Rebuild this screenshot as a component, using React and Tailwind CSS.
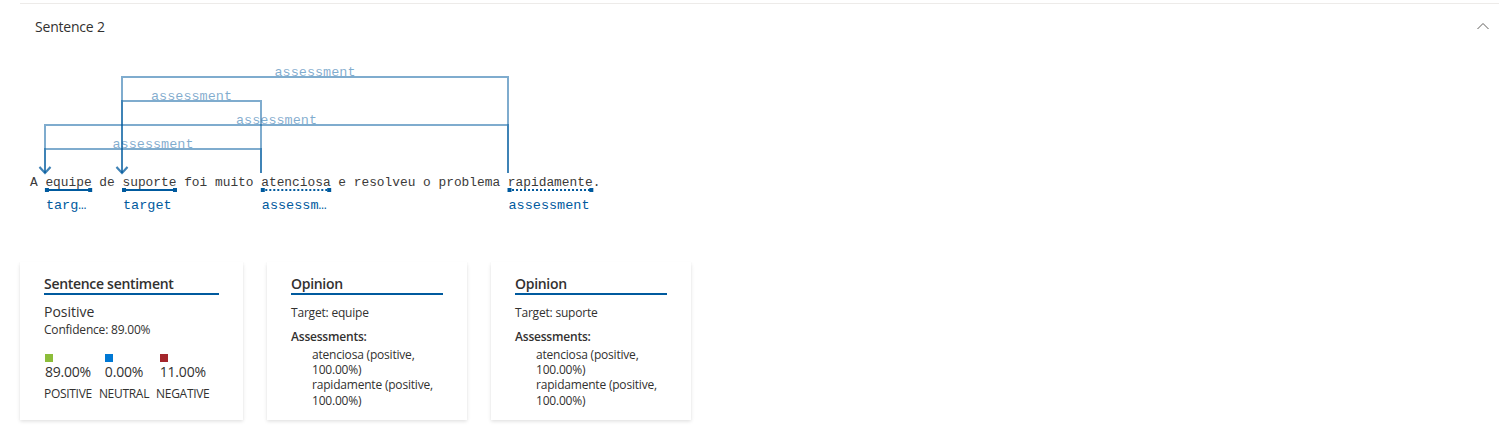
const CW = 7.71;
const X0 = 30;
const SENTENCE = "A equipe de suporte foi muito atenciosa e resolveu o problema rapidamente.";

const wx = (i) => X0 + i * CW;

const words = [
    { start: 2, len: 6, label: "targ…", dotted: false },
    { start: 12, len: 7, label: "target", dotted: false },
    { start: 30, len: 9, label: "assessm…", dotted: true },
    { start: 62, len: 11, label: "assessment", dotted: true },
];

// arcs: from (assessment x) to (target x, arrow), at height y
const arcs = [
    { from: 508, to: 122, y: 77 },
    { from: 261, to: 122, y: 101 },
    { from: 508, to: 45, y: 125 },
    { from: 261, to: 45, y: 149 },
];

const mono = { fontFamily: "'Liberation Mono', monospace" };

const Diagram = () => {
    const bottom = 173;
    return (
        <svg width="1492" height="172" className="block">
            <g transform="translate(-20,-48)">
                {arcs.map((a, i) => (
                    <g key={i} stroke="#005a9e" strokeOpacity="0.5" strokeWidth="2" fill="none">
                        <polyline points={`${a.from},${bottom} ${a.from},${a.y} ${a.to},${a.y} ${a.to},${bottom}`} />
                        <polyline points={`${a.to - 5.5},${bottom - 6} ${a.to},${bottom} ${a.to + 5.5},${bottom - 6}`} />
                    </g>
                ))}
                {arcs.map((a, i) => (
                    <text
                        key={"t" + i}
                        x={(a.from + a.to) / 2}
                        y={a.y - 1.5}
                        textAnchor="middle"
                        fill="#005a9e"
                        fillOpacity="0.5"
                        fontSize="13.5"
                        style={mono}
                    >
                        assessment
                    </text>
                ))}
                <text x={X0} y={186} fontSize="12.85" fill="#3b3a39" style={{ ...mono, whiteSpace: "pre" }}>
                    {SENTENCE}
                </text>
                {words.map((w, i) => {
                    const x1 = wx(w.start);
                    const x2 = wx(w.start + w.len);
                    return (
                        <g key={"w" + i} fill="#005a9e">
                            <line
                                x1={x1}
                                x2={x2}
                                y1={190}
                                y2={190}
                                stroke="#005a9e"
                                strokeWidth="2"
                                strokeDasharray={w.dotted ? "2 2" : undefined}
                            />
                            <rect x={x1 - 0.5} y={188} width="4" height="4" />
                            <rect x={x2 - 3.5} y={188} width="4" height="4" />
                            <text x={x1 + 0.5} y={208.5} fontSize="13.5" style={mono}>
                                {w.label}
                            </text>
                        </g>
                    );
                })}
            </g>
        </svg>
    );
};

const Card = ({ width, title, children }) => {
    return (
        <div
            className={`${width} h-[158px] bg-white px-6 pt-[13px] shadow-[0_1.6px_3.6px_rgba(0,0,0,0.13),0_0.3px_0.9px_rgba(0,0,0,0.11)]`}
        >
            <div className="text-[14px] leading-[18px] font-semibold tracking-[-0.3px] border-b-2 border-[#005a9e]">
                {title}
            </div>
            {children}
        </div>
    );
};

const scores = [
    { value: "89.00%", label: "POSITIVE", color: "bg-[#8cbd3a]" },
    { value: "0.00%", label: "NEUTRAL", color: "bg-[#0078d4]" },
    { value: "11.00%", label: "NEGATIVE", color: "bg-[#a4262c]" },
];

const Opinion = ({ target }) => (
    <Card width="w-[200px]" title="Opinion">
        <div className="mt-[10px] text-[12px] leading-[16px] tracking-[-0.2px]">Target: {target}</div>
        <div className="mt-[8px] text-[12px] leading-[16px] font-semibold tracking-[-0.2px]">Assessments:</div>
        <div className="pl-[21px] mt-[1.5px] text-[12px] leading-[15.4px] tracking-[-0.2px]">
            <div>atenciosa (positive, 100.00%)</div>
            <div>rapidamente (positive, 100.00%)</div>
        </div>
    </Card>
);

export default function App() {
    return (
        <div
            className="bg-white text-[#323130] w-[1512px] h-[431px] overflow-hidden pl-5 pr-[13px]"
            style={{ fontFamily: "'Segoe UI', 'Open Sans', sans-serif" }}
        >
            <div className="mt-[3px] border-t border-[#edebe9]">
                <div className="h-[44px] flex items-center justify-between pl-[15px] pr-[10px]">
                    <span className="text-[14px] tracking-[-0.2px]">Sentence 2</span>
                    <svg width="12" height="8" viewBox="0 0 12 8">
                        <polyline points="0.5,7 6,1.5 11.5,7" fill="none" stroke="#605e5c" strokeWidth="1" />
                    </svg>
                </div>
            </div>

            <Diagram />

            <div className="mt-[42px] flex gap-6">
                <Card width="w-[223px]" title="Sentence sentiment">
                    <div className="mt-[7px] text-[14px] leading-[20px]">Positive</div>
                    <div className="text-[12px] leading-[16px] tracking-[-0.2px]">Confidence: 89.00%</div>
                    <div className="mt-[16px] flex gap-[7px]">
                        {scores.map((s) => (
                            <div key={s.label} className="flex flex-col items-center">
                                <div>
                                    <div className={`w-2 h-2 ${s.color}`}></div>
                                    <div className="text-[14px] leading-[20px] tracking-[-0.2px]">{s.value}</div>
                                </div>
                                <div className="mt-[4px] text-[12px] leading-[16px] tracking-[-0.3px]">{s.label}</div>
                            </div>
                        ))}
                    </div>
                </Card>
                <Opinion target="equipe" />
                <Opinion target="suporte" />
            </div>
        </div>
    );
}
